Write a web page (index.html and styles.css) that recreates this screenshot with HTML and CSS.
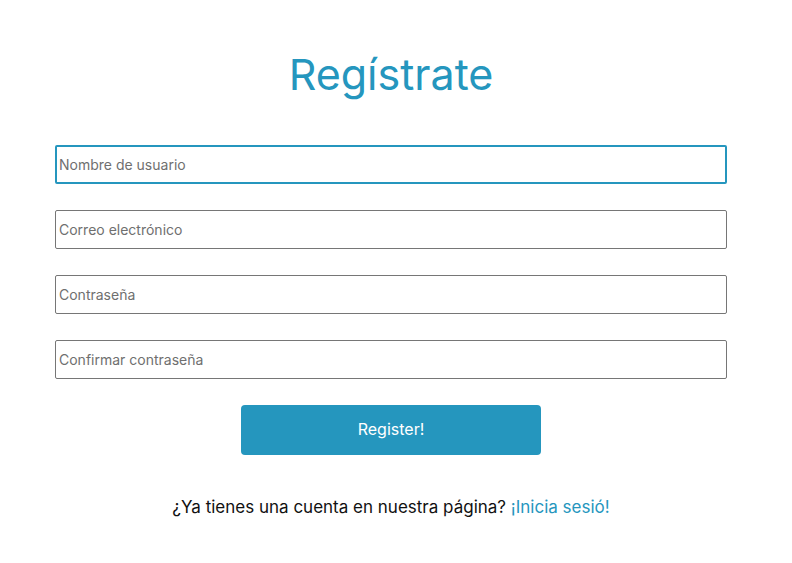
FILE: index.html
```html
<!DOCTYPE html>
<html lang="es">
<head>
<meta charset="utf-8">
<title>Regístrate</title>
<link rel="stylesheet" href="styles.css">
</head>
<body>
<main class="page">
  <h1 class="title">Regístrate</h1>
  <form class="form">
    <input class="field field--focus" type="text" placeholder="Nombre de usuario">
    <input class="field" type="email" placeholder="Correo electrónico">
    <input class="field" type="password" placeholder="Contraseña">
    <input class="field" type="password" placeholder="Confirmar contraseña">
    <button class="btn" type="button">Register!</button>
  </form>
  <p class="login">¿Ya tienes una cuenta en nuestra página? <a class="login__link" href="#">¡Inicia sesió!</a></p>
</main>
</body>
</html>
```
FILE: styles.css
```css
* { box-sizing: border-box; }
body {
  margin: 0;
  font-family: Inter, "Open Sans", sans-serif;
  color: #111;
  background: #fff;
}
.page {
  width: 672px;
  margin-left: 55px;
  display: flex;
  flex-direction: column;
  align-items: center;
}
.title {
  margin: 49px 0 0;
  height: 96px;
  font-size: 43px;
  font-weight: 400;
  color: #2596be;
  line-height: 50px;
}
.form {
  width: 100%;
  display: flex;
  flex-direction: column;
  align-items: center;
  gap: 26px;
}
.field {
  width: 100%;
  height: 39px;
  border: 1px solid #767676;
  border-radius: 2px;
  padding: 0 3px;
  font-family: inherit;
  font-size: 14px;
  color: #333;
  outline: none;
}
.field::placeholder { color: #6f6f6f; }
.field--focus {
  border: 2px solid #2596be;
  padding: 0 2px;
}
.btn {
  width: 300px;
  height: 50px;
  border: 0;
  border-radius: 4px;
  background: #2596be;
  color: #fff;
  font-family: inherit;
  font-size: 16px;
  padding: 0 0 3px;
}
.login {
  margin: 42px 0 0;
  font-size: 17px;
}
.login__link {
  color: #2596be;
  text-decoration: none;
}
```
